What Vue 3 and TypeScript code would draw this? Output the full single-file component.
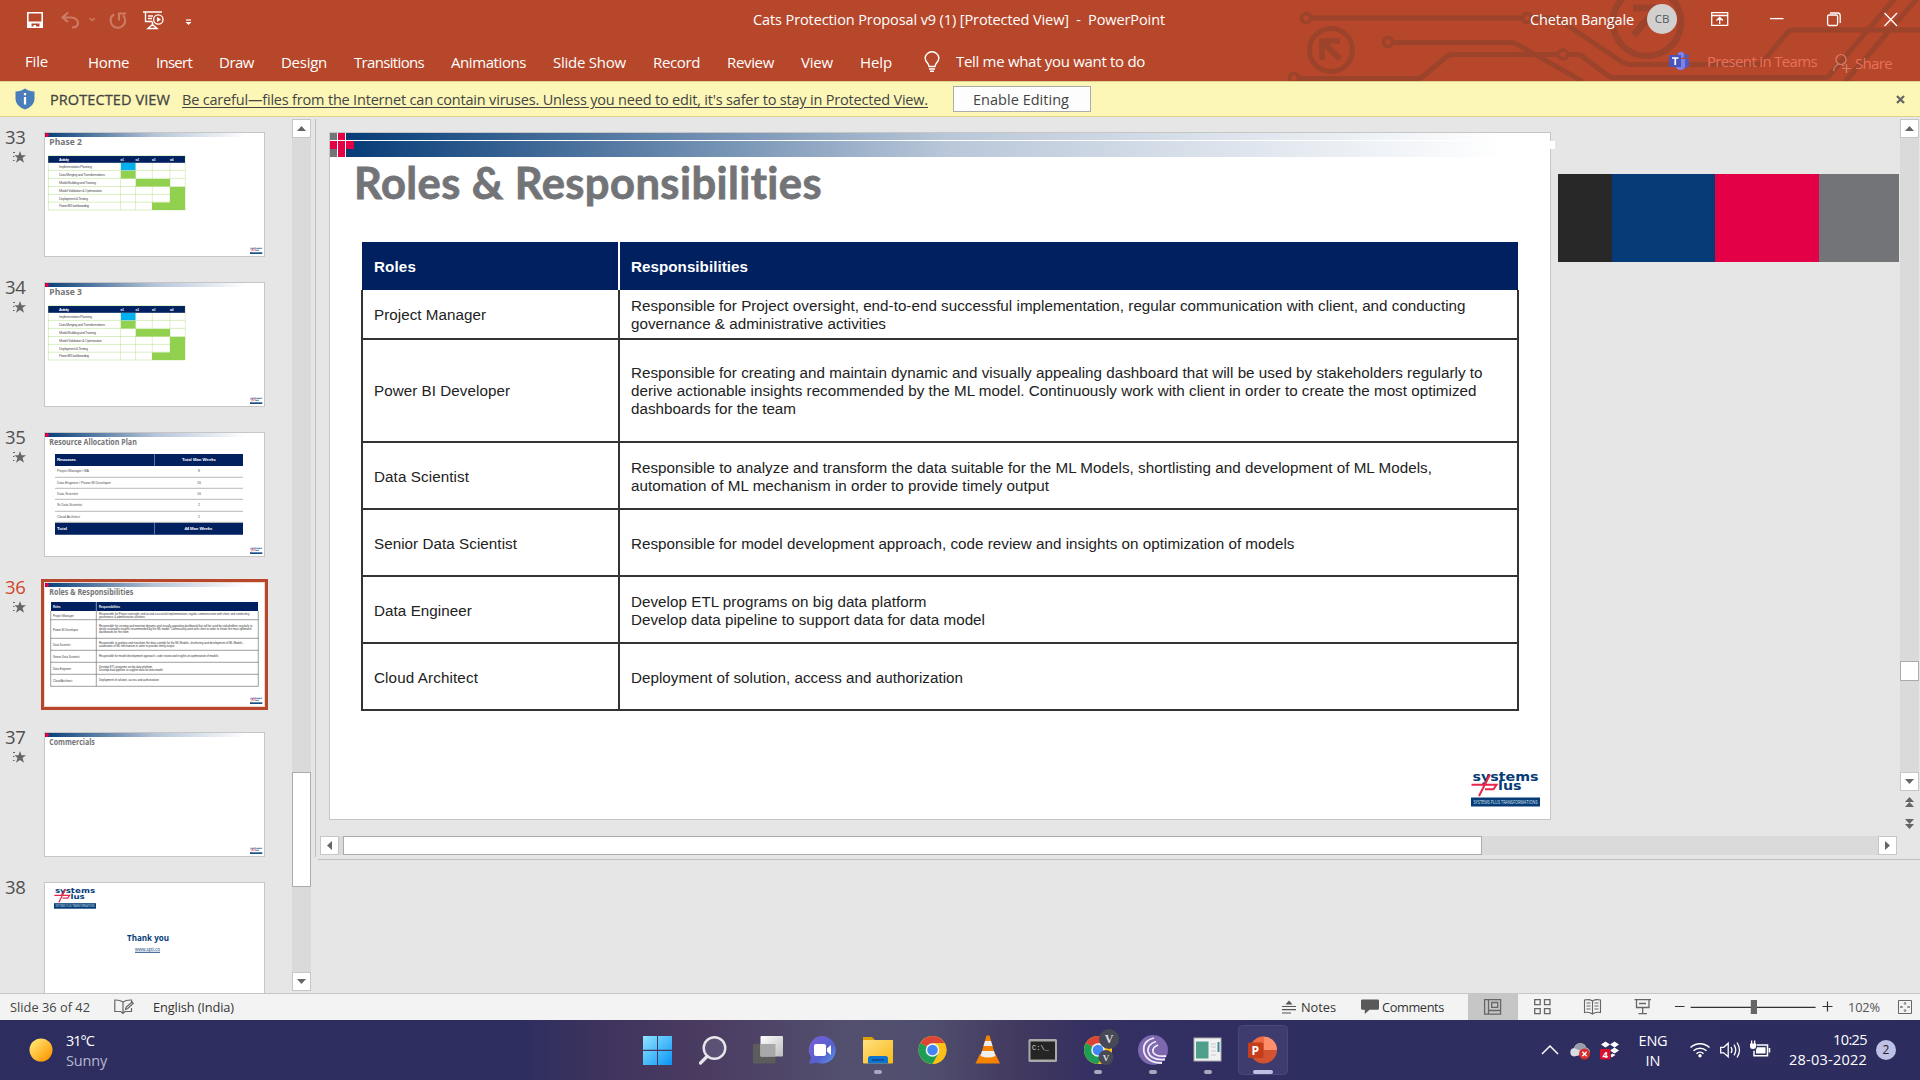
<script setup lang="ts">
import { ref } from 'vue'

interface Line { t: string; w: number }
interface RoleRow { role: string; rw: number; h: number; lines: Line[] }

// Spreads the letters of a label so that it takes the given width.
const vFit = {
  mounted(el: HTMLElement, binding: { value: number }) {
    const n = (el.textContent ?? '').length
    const natural = el.getBoundingClientRect().width
    if (n > 0) el.style.letterSpacing = `${((binding.value - natural) / n).toFixed(4)}px`
  },
}

const windowTitle = 'Cats Protection Proposal v9 (1) [Protected View]  -  PowerPoint'

const tabs = ref<Line[]>([
  { t: 'Home', w: 41 }, { t: 'Insert', w: 36 }, { t: 'Draw', w: 35 }, { t: 'Design', w: 46 },
  { t: 'Transitions', w: 70 }, { t: 'Animations', w: 75 }, { t: 'Slide Show', w: 73 },
  { t: 'Record', w: 47 }, { t: 'Review', w: 47 }, { t: 'View', w: 32 }, { t: 'Help', w: 32 },
])

const roles = ref<RoleRow[]>([
  { role: 'Project Manager', rw: 112, h: 50, lines: [
    { t: 'Responsible for Project oversight, end-to-end successful implementation, regular communication with client, and conducting', w: 834.5 },
    { t: 'governance & administrative activities', w: 255 }] },
  { role: 'Power BI Developer', rw: 136, h: 103, lines: [
    { t: 'Responsible for creating and maintain dynamic and visually appealing dashboard that will be used by stakeholders regularly to', w: 851.5 },
    { t: 'derive actionable insights recommended by the ML model. Continuously work with client in order to create the most optimized', w: 845.5 },
    { t: 'dashboards for the team', w: 165 }] },
  { role: 'Data Scientist', rw: 95, h: 67, lines: [
    { t: 'Responsible to analyze and transform the data suitable for the ML Models, shortlisting and development of ML Models,', w: 801 },
    { t: 'automation of ML mechanism in order to provide timely output', w: 418 }] },
  { role: 'Senior Data Scientist', rw: 143, h: 67, lines: [
    { t: 'Responsible for model development approach, code review and insights on optimization of models', w: 663.5 }] },
  { role: 'Data Engineer', rw: 98, h: 67, lines: [
    { t: 'Develop ETL programs on big data platform', w: 295.5 },
    { t: 'Develop data pipeline to support data for data model', w: 354 }] },
  { role: 'Cloud Architect', rw: 104, h: 67, lines: [
    { t: 'Deployment of solution, access and authorization', w: 332 }] },
])

const miniY = [32.3, 46, 61.3, 73.3, 85.3, 97.3]
const miniLines = [36.7, 55.3, 67.3, 79.3, 91.3, 103.3]

const thumbs = ref([
  { n: 33, kind: 'phase', title: 'Phase 2', tw: 32.5 },
  { n: 34, kind: 'phase', title: 'Phase 3', tw: 32.5 },
  { n: 35, kind: 'resource', title: 'Resource Allocation Plan', tw: 87.5 },
  { n: 36, kind: 'roles', title: 'Roles & Responsibilities', tw: 84 },
  { n: 37, kind: 'plain', title: 'Commercials', tw: 45.5 },
  { n: 38, kind: 'thanks', title: '', tw: 0 },
])

const activities: Line[] = [
  { t: 'Implementation Planning', w: 33 }, { t: 'Data Merging and Transformations', w: 46 },
  { t: 'Model Building and Training', w: 37 }, { t: 'Model Validation & Optimization', w: 43 },
  { t: 'Deployment & Testing', w: 29 }, { t: 'Power BI Dashboarding', w: 30 },
]
const phaseLines = [37.4, 45.4, 53.5, 61.4, 69.2, 77]
const resources = [
  { t: 'Project Manager / BA', w: 32, v: '8', y: 39.3 },
  { t: 'Data Engineer / Power BI Developer', w: 54, v: '16', y: 51 },
  { t: 'Data Scientist', w: 21, v: '16', y: 62 },
  { t: 'Sr Data Scientist', w: 25, v: '2', y: 73 },
  { t: 'Cloud Architect', w: 23, v: '2', y: 85 },
]
</script>

<template>
  <div class="app">
    <header class="head">
      <svg class="circuit" width="640" height="81" viewBox="1280 0 640 81" fill="none" stroke="#9b432b" stroke-width="5">
        <circle cx="1306" cy="18" r="4.5" stroke-width="3.5" /><path d="M1311 18H1523" />
        <circle cx="1527" cy="18" r="4.5" stroke-width="3.5" /><path d="M1532 18h24l14 9L1622 62q4 2.500 8 2.500H1755q6 0 9-4L1787 33q2-3 6-3H1920" />
        <circle cx="1388" cy="42" r="4.500" stroke-width="3.500" /><path d="M1393 42.500H1510q5 0 9 3L1582 81" />
        <circle cx="1294" cy="78" r="4.500" stroke-width="3.500" /><path d="M1299 78.500H1417q4 0 7-3L1446 57q3-2.500 7-2.500H1558" />
        <circle cx="1563" cy="54.500" r="4.500" stroke-width="3.500" /><path d="M1568 54.500h9q4 0 7 3L1607 75q3 2.500 7 2.500H1825q4 0 6-4L1896-3" />
        <path d="M1843 84 1921-6" />
        <circle cx="1331" cy="50" r="21.500" /><path d="M1340 41h-18v19M1323 42l17 17" stroke-width="5.500" />
        <circle cx="1647" cy="22" r="34" stroke-width="6.500" /><path d="M1633 8h24v24M1656 9l-22 26" stroke-width="7" />
      </svg>

      <div class="titlebar">
        <svg width="200" height="40" viewBox="0 0 200 40" fill="none">
          <path d="M27.800 12.800h14.400v14.400H27.800z" stroke="#fff" stroke-width="1.600" />
          <path d="M28 21.500h14v5.500h-2.500v-3.500h-8v3.500H28zM33.500 25h2.500v3h-2.500z" fill="#fff" />
          <g stroke="#cd7b66" stroke-width="2.200">
            <path d="M62.500 17.500h9q6.500 1 6.500 5.500t-6 4.500M68 12.500l-5.500 5 5.500 4.500" />
            <path d="M89.500 18l2.700 2.500L95 18" stroke-width="1.300" />
            <path d="M114 14.300a7.300 7.300 0 1 0 9 1M126 13.500h-7v7" />
          </g>
          <path d="M143 12h19M145.500 12v9.500h7M148 16h5M148 18.500h4M152.500 22v4M148 28.500l4.500-4 4.500 4z" stroke="#fff" stroke-width="1.400" />
          <circle cx="158.300" cy="19.500" r="4.700" stroke="#fff" stroke-width="1.300" /><path d="M157 17l4 2.500-4 2.500z" fill="#fff" />
          <path d="M186 20h5" stroke="#fff" stroke-width="1.200" /><path d="M185.500 22h6l-3 3z" fill="#fff" />
        </svg>
        <span v-fit="412" class="t title">{{ windowTitle }}</span>
        <span v-fit="104" class="t user">Chetan Bangale</span>
        <span class="avatar">CB</span>
        <svg class="winctl" width="200" height="40" viewBox="1700 0 200 40" fill="none" stroke="#fff" stroke-width="1.300">
          <path d="M1711.700 12.700h16v12.600h-16zM1711.700 15.500h16M1719.700 24v-6M1716.500 20.500l3.200-3 3.200 3" />
          <path d="M1770 18.600h13.500" />
          <path d="M1827.600 16.500q0-1.500 1.500-1.500h7q1.500 0 1.500 1.500v7.500q0 1.500-1.500 1.500h-7q-1.500 0-1.500-1.500zM1830 13h7.500q2.700 0 2.700 2.700v7.300" />
          <path d="M1884.500 13l12.500 13M1897 13l-12.500 13" />
        </svg>
      </div>

      <nav class="ribbon">
        <span v-fit="23" class="t file">File</span>
        <div class="tabs"><span v-for="tab in tabs" :key="tab.t" v-fit="tab.w" class="t">{{ tab.t }}</span></div>
        <svg class="bulb" width="16" height="22" viewBox="0 0 16 22" fill="none" stroke="#fff" stroke-width="1.400">
          <path d="M5 15.500C5 12 1.200 11.500 1.200 7.200a6.800 6.400 0 0 1 13.600 0C14.800 11.500 11 12 11 15.500zM5 18h6M6 20.300h4" />
        </svg>
        <span v-fit="189" class="t tell">Tell me what you want to do</span>
        <svg class="teams" width="21" height="20" viewBox="0 0 21 20">
          <circle cx="12" cy="4" r="3.200" fill="#7b83eb" /><circle cx="17.500" cy="5" r="2.200" fill="#5059c9" />
          <path d="M14 8h6v6q0 3-3.500 3z" fill="#5059c9" /><path d="M8 8h8v7q0 4-4.500 4T7 15z" fill="#7b83eb" />
          <path d="M0 4h12v12H0z" fill="#4b53bc" /><path d="M3 7h6.500M6.250 7v7" stroke="#fff" stroke-width="1.700" />
        </svg>
        <span v-fit="110" class="t present">Present in Teams</span>
        <svg class="shareico" width="18" height="20" viewBox="0 0 18 20" fill="none" stroke="#d2806c" stroke-width="1.200">
          <circle cx="8" cy="6.500" r="5" /><path d="M.7 18q.3-5 5-7M9 12l2 1M13.500 11v9M9 15.500h9" />
        </svg>
        <span v-fit="37" class="t share">Share</span>
      </nav>
    </header>

    <div class="notice">
      <svg width="20" height="22" viewBox="0 0 20 22"><path d="M10 .5Q6 3.500.5 3.500V11q0 7 9.500 10.500Q19.500 18 19.500 11V3.500Q14 3.500 10 .5z" fill="#4a7ebb" /><path d="M10 9v7.500M10 5v2.300" stroke="#fff" stroke-width="2.200" /></svg>
      <span v-fit="120" class="t pv">PROTECTED VIEW</span>
      <span v-fit="746" class="t careful">Be careful—files from the Internet can contain viruses. Unless you need to edit, it's safer to stay in Protected View.</span>
      <button class="enable"><span v-fit="96" class="t">Enable Editing</span></button>
      <svg class="x" width="9" height="9" viewBox="0 0 9 9"><path d="M1 1l7 7M8 1L1 8" stroke="#666" stroke-width="2.300" /></svg>
    </div>

    <main class="work">
      <aside class="pane">
        <div v-for="s in thumbs" :key="s.n" class="item" :class="{ sel: s.n === 36 }">
          <div class="num">
            <span v-fit="20.5" class="t">{{ s.n }}</span>
            <svg v-if="s.n !== 38" width="13" height="12" viewBox="0 0 13 12" fill="#666"><path d="M7 0l1.600 4.200H13L9.500 7 11 11.700 7 9 3 11.700 4.500 7 1.500 4.200h4z" /><path d="M0 1h2v1H0zM0 5h1.500v1H0zM0 9h1.500v1H0z" /></svg>
          </div>
          <div class="thumb">
            <svg width="219" height="123" viewBox="0 0 219 123">
              <defs>
                <linearGradient id="bar"><stop offset="0" stop-color="#053c77" /><stop offset=".5" stop-color="#b5c4d7" /><stop offset=".92" stop-color="#fff" /></linearGradient>
              </defs>
              <template v-if="s.kind !== 'thanks'">
                <rect width="219" height="4" fill="url(#bar)" />
                <path d="M0 1h1V0h2v1h1v2H3v1H1V3H0z" fill="#e40046" />
                <text x="4.300" y="12" class="ttl" :textLength="s.tw" lengthAdjust="spacingAndGlyphs">{{ s.title }}</text>
              </template>
              <g v-if="s.kind === 'phase'" class="mini">
                <rect x="3" y="23" width="137" height="6.800" fill="#002060" />
                <text x="14" y="27.700" class="w" textLength="10">Activity</text>
                <text v-for="(x, i) in [75.5, 90.5, 107, 125]" :key="x" :x="x" y="27.500" class="w wk" textLength="3.500">w{{ i + 1 }}</text>
                <rect x="76" y="30" width="14.500" height="7.400" fill="#00b0f0" />
                <path d="M76 38h14.500v7.400H76zM91 46h34v7.500H91zM125 54h15v23H125zM107 69.500h18V77h-18z" fill="#92d050" />
                <path v-for="y in phaseLines" :key="y" :d="`M3 ${y}H140`" stroke="#92d050" stroke-opacity=".5" stroke-width=".7" />
                <path d="M3.400 22.600V77M75.600 30v47M90.600 30v47M107.300 30v47M125 30v47M140.300 22.600V77M3 22.600h137" stroke="#92d050" stroke-opacity=".45" stroke-width=".7" />
                <text v-for="(a, i) in activities" :key="a.t" x="14" :y="35.200 + i * 7.850" :textLength="a.w">{{ a.t }}</text>
              </g>
              <g v-if="s.kind === 'resource'" class="mini">
                <path d="M10 21h188v12H10zM10 89.700h188v12H10z" fill="#002060" />
                <path d="M109.500 21v12M109.500 90v11.500" stroke="#8a96b4" stroke-width=".7" />
                <path d="M10 44.300h188M10 55.300h188M10 66.300h188M10 78.300h188M10 89.300h188" stroke="#999" stroke-width=".7" />
                <text x="12" y="28" class="w b" textLength="19">Resources</text><text x="137" y="28" class="w b" textLength="34">Total Man Weeks</text>
                <g v-for="r in resources" :key="r.t"><text x="12" :y="r.y" :textLength="r.w">{{ r.t }}</text><text x="154" :y="r.y" text-anchor="middle">{{ r.v }}</text></g>
                <text x="12" y="97" class="w b" textLength="10">Total</text><text x="139.500" y="97" class="w b" textLength="28">44 Man Weeks</text>
              </g>
              <g v-if="s.kind === 'roles'" class="mini r">
                <rect x="6" y="19" width="207" height="9" fill="#002060" />
                <text x="8" y="25" class="w" textLength="7.500">Roles</text><text x="54" y="25" class="w" textLength="21">Responsibilities</text>
                <path d="M51.300 19v9" stroke="#ccd" stroke-width=".7" />
                <path d="M5.700 28v75.300M51.300 28v75.300M213.300 28v75.300" stroke="#777" stroke-width=".7" />
                <path v-for="y in miniLines" :key="y" :d="`M5.500 ${y}H213.500`" stroke="#777" stroke-width=".7" />
                <g v-for="(r, i) in roles" :key="r.role">
                  <text x="8" :y="miniY[i] + 1.600" :textLength="r.rw * 0.185">{{ r.role }}</text>
                  <text v-for="(l, j) in r.lines" :key="l.t" x="54" :y="miniY[i] + 1.000 + (j - (r.lines.length - 1) / 2) * 3.200" :textLength="l.w * 0.18">{{ l.t }}</text>
                </g>
              </g>
              <template v-if="s.kind === 'thanks'">
                <text x="82" y="57.800" class="ttl ty" textLength="42" lengthAdjust="spacingAndGlyphs">Thank you</text>
                <text x="90" y="68" class="url" textLength="25">www.spti.co</text><path d="M90 69.300h25" stroke="#053c77" stroke-width=".9" />
              </template>
              <svg :x="s.kind === 'thanks' ? 9 : 205" :y="s.kind === 'thanks' ? 4 : 114" :width="s.kind === 'thanks' ? 42 : 12.500" :height="s.kind === 'thanks' ? 22 : 7" viewBox="0 0 69 36" preserveAspectRatio="none">
                <use href="#brand" />
              </svg>
            </svg>
          </div>
        </div>
      </aside>

      <div class="vbar left">
        <i class="btn"><svg width="9" height="5"><path d="M0 5l4.500-5L9 5z" /></svg></i>
        <i class="knob"></i>
        <i class="btn end"><svg width="9" height="5"><path d="M0 0l4.500 5L9 0z" /></svg></i>
      </div>

      <section class="stage">
        <div class="upper">
          <div class="canvas">
            <div class="row">
              <article class="slide">
                <svg class="band" width="1226" height="25" viewBox="329 132 1226 25">
                  <defs><linearGradient id="big" gradientUnits="userSpaceOnUse" x1="346" x2="1551" y1="0" y2="0"><stop offset="0" stop-color="#053c77" /><stop offset=".5" stop-color="#b9c7d9" /><stop offset=".96" stop-color="#fff" /></linearGradient></defs>
                  <path d="M346 133h1204v7H346zM346 141h1204v16H346z" fill="url(#big)" />
                  <path d="M330 133h7v7h-7zM330 149h7v8h-7z" fill="#737477" />
                  <path d="M338 133h7v7h-7zM330 141h7v8h-7zM338 141h7v16h-7zM346 141h8v8h-8z" fill="#e40046" />
                  <path d="M1550 141h5v8h-5z" fill="#fff" />
                </svg>
                <h1><span v-fit="468" class="t">Roles &amp; Responsibilities</span></h1>
                <div class="table">
                  <div class="thead"><b><span v-fit="42" class="t">Roles</span></b><b><span v-fit="117" class="t">Responsibilities</span></b></div>
                  <div v-for="r in roles" :key="r.role" class="tr" :class="{ tall: r.h === 103, first: r.h === 50 }">
                    <div><span v-fit="r.rw" class="t">{{ r.role }}</span></div>
                    <div><span v-for="l in r.lines" :key="l.t" v-fit="l.w" class="t">{{ l.t }}</span></div>
                  </div>
                </div>
                <svg class="logo" width="69" height="36" viewBox="0 0 69 36">
                  <g id="brand">
                    <text x="1.500" y="10" class="lg" textLength="66" lengthAdjust="spacingAndGlyphs">systems</text>
                    <text x="27" y="19" class="lg" textLength="23.500" lengthAdjust="spacingAndGlyphs">lus</text>
                    <path d="M19 3.500L8 25M.5 13.700h25l-3 4.500h-8.500" fill="none" stroke="#e8264c" stroke-width="2" />
                    <rect y="26.500" width="69" height="9" fill="#053c77" />
                    <text x="2.500" y="32.800" class="tag" textLength="64" lengthAdjust="spacingAndGlyphs">SYSTEMS PLUS TRANSFORMATIONS</text>
                  </g>
                </svg>
              </article>
              <div class="swatches"><i class="s1"></i><i class="s2"></i><i class="s3"></i><i class="s4"></i></div>
            </div>
            <div class="hbar">
              <i class="btn"><svg width="5" height="9"><path d="M5 0L0 4.500 5 9z" /></svg></i>
              <i class="knob"></i>
              <i class="btn end"><svg width="5" height="9"><path d="M0 0l5 4.500L0 9z" /></svg></i>
            </div>
          </div>
          <div class="rightcol">
            <div class="vbar right">
              <i class="btn"><svg width="9" height="5"><path d="M0 5l4.500-5L9 5z" /></svg></i>
              <i class="knob"></i>
              <i class="btn end"><svg width="9" height="5"><path d="M0 0l4.500 5L9 0z" /></svg></i>
            </div>
            <svg class="dbl" width="19" height="44" viewBox="0 0 19 44" fill="#666"><path d="M9.500 6l4.500 5h-9zM9.500 11l4.500 5h-9zM5 28h9l-4.500 5zM5 33h9l-4.500 5z" /></svg>
          </div>
        </div>
        <div class="notes"></div>
      </section>
    </main>

    <footer class="status">
      <span v-fit="80" class="t c1">Slide 36 of 42</span>
      <svg class="spell" width="20" height="16" viewBox="0 0 20 16" fill="none" stroke="#666" stroke-width="1.200"><path d="M9 13.500V3Q6 .8.800 1v11.500h6L9 14.500l2-2h6.500V9M9 3q3-2.200 8.500-2v2M11.500 10.500l.7-2.500 6-5 1 1.500-5.500 5z" /></svg>
      <span v-fit="81" class="t">English (India)</span>
      <svg class="n1" width="14" height="14" viewBox="0 0 14 14"><path d="M3.500 4.500L7 .5l3.500 4z" fill="#555" /><path d="M0 6.500h14M0 9.700h14M0 13h9" stroke="#555" stroke-width="1.200" /></svg>
      <span v-fit="35" class="t n2">Notes</span>
      <svg class="n3" width="18" height="16" viewBox="0 0 19 16"><path d="M1.500 0h16q1.500 0 1.500 1.500v8q0 1.500-1.500 1.500H9l-5 4.500V11H1.500Q0 11 0 9.500v-8Q0 0 1.500 0z" fill="#595959" /></svg>
      <span v-fit="62" class="t">Comments</span>
      <svg class="views" width="184" height="26" viewBox="1468 994 184 26" fill="none" stroke="#666" stroke-width="1.300">
        <path d="M1468 994h50v26h-50z" fill="#c6c6c6" stroke="none" />
        <path d="M1484.600 999.600h16v14.500h-16zM1488.500 1000v14M1488.500 1010.500h12M1491.700 1002.500h6v4.800h-6z" />
        <path d="M1534.700 999.600h5.500v5h-5.500zM1544.500 999.600h5.500v5h-5.500zM1534.700 1008.600h5.500v5h-5.500zM1544.500 1008.600h5.500v5h-5.500z" />
        <path d="M1592.500 1001q-3-2-8-1v12.500q5-1 8 1.500 3-2.500 8-1.500V1000q-5-1-8 1zM1592.500 1001v13M1586.500 1003h4M1586.500 1006h4M1586.500 1009h4M1594.500 1003h4M1594.500 1006h4M1594.500 1009h4" stroke-width="1.100" />
        <path d="M1634.500 999.700h16.500M1636.500 1000v7.500h12.500V1000M1639 1003.500h7M1642.700 1008v5.500M1638.500 1013.600h8.500" />
      </svg>
      <svg class="zoom" width="160" height="26" viewBox="1674 994 160 26" fill="none" stroke="#333" stroke-width="1.200">
        <path d="M1675 1006.500h9.500M1822.500 1006.500h10M1827.500 1001.500v10M1690.600 1007.300h125" /><path d="M1750.800 1000h6.200v14h-6.200z" fill="#666" stroke="none" />
      </svg>
      <span v-fit="32" class="t pct">102%</span>
      <svg class="fitico" width="14" height="14" viewBox="0 0 14 14" fill="none" stroke="#666"><path d="M.5.5h13v13H.5zM7 2.500v2.500M7 9v2.500M2.500 7H5M9 7h2.500M6 3.500L7 2.500l1 1M6 10.500l1 1 1-1M3.500 6l-1 1 1 1M10.500 6l1 1-1 1" /></svg>
    </footer>

    <div class="taskbar">
      <svg class="sun" width="24" height="24" viewBox="0 0 24 24"><defs><linearGradient id="sun" x2="1" y2="1"><stop offset=".1" stop-color="#ffe872" /><stop offset=".9" stop-color="#ff9500" /></linearGradient></defs><circle cx="12" cy="12" r="11.500" fill="url(#sun)" /></svg>
      <div class="weather"><span v-fit="28" class="t">31°C</span><span v-fit="41" class="t dim">Sunny</span></div>
      <svg class="icons" width="660" height="60" viewBox="630 1020 660 60">
        <defs>
          <linearGradient id="win" x2="1" y2="1"><stop offset="0" stop-color="#8fe3ff" /><stop offset="1" stop-color="#0a95f5" /></linearGradient>
          <linearGradient id="chat" x2="1" y2="1"><stop offset="0" stop-color="#7b60d8" /><stop offset=".6" stop-color="#5560cf" /><stop offset="1" stop-color="#5b9df0" /></linearGradient>
          <linearGradient id="fold" x2="1" y2="1"><stop offset="0" stop-color="#ffe082" /><stop offset="1" stop-color="#fbb915" /></linearGradient>
          <linearGradient id="tv" x2="1" y2="1"><stop offset="0" stop-color="#fff" /><stop offset="1" stop-color="#bdbdbd" /></linearGradient>
          <g id="chrome">
            <circle r="14" fill="#fbc116" />
            <path d="M0 0L-12.100-7A14 14 0 0 1 12.100-7z" fill="#dc4437" />
            <path d="M0 0L-12.100-7A14 14 0 0 0 0 14L6 3.500z" fill="#1e9d57" />
            <path d="M0-7H12.100A14 14 0 0 1 0 14L6 3.500z" fill="#fbc116" />
            <circle r="6.800" fill="#f4f4f4" /><circle r="5.300" fill="#4285f4" />
          </g>
        </defs>
        <path d="M643 1036h14v13.800h-14zM658 1036h14v13.800h-14zM643 1051h14v14h-14zM658 1051h14v14h-14z" fill="url(#win)" />
        <circle cx="714.500" cy="1048" r="10.800" fill="#6d6687" fill-opacity=".5" stroke="#e6e6ea" stroke-width="2.400" /><path d="M707 1056.500l-6.500 6.500" stroke="#e6e6ea" stroke-width="3.200" stroke-linecap="round" />
        <rect x="753" y="1044" width="22.500" height="19.500" rx="1" fill="#5c5c5c" /><rect x="760.500" y="1036" width="22.500" height="20.500" rx="1" fill="url(#tv)" /><rect x="760.500" y="1044" width="15" height="12.500" fill="#a8a8a8" />
        <path d="M823 1036a13.800 13.800 0 1 1-5.500 26.800l-8.500 1 2.200-6A14 14 0 0 1 823 1036z" fill="url(#chat)" /><rect x="814" y="1044" width="12" height="12" rx="2" fill="#fff" /><path d="M827 1048.500l4-3.500v10l-4-3.500z" fill="#fff" />
        <path d="M863 1037h9l3 3h18v23h-30z" fill="#dfa000" /><rect x="863" y="1040" width="30" height="23.500" rx="1" fill="url(#fold)" /><path d="M868 1063.500v-5q0-2.500 2.500-2.500h15q2.500 0 2.500 2.500v5z" fill="#0f74cf" /><path d="M872 1060h12" stroke="#0a4a94" stroke-width="1.500" />
        <use href="#chrome" x="932.500" y="1050" />
        <path d="M980 1054h15.500l4.500 9.500h-24.500z" fill="#f58200" /><path d="M986.500 1035.500h3l6.500 22.500q-8 4-16 0z" fill="#f58200" /><path d="M985 1041h6l1.500 5h-9zM982 1051h12l1.500 5q-7.500 3-15 0z" fill="#efefef" />
        <rect x="1028.500" y="1039" width="28.500" height="23" rx="1.500" fill="#a9a9a9" /><rect x="1030.500" y="1041.500" width="24.500" height="18" fill="#252525" /><text x="1032" y="1049.500" class="cmd">C:\_</text>
        <use href="#chrome" x="1098" y="1050" /><circle cx="1109" cy="1039" r="10" fill="#474957" /><circle cx="1106" cy="1057.500" r="7.500" fill="#474957" />
        <g class="vk"><text x="1109" y="1043">V</text><text x="1106" y="1061" class="sm">V</text></g>
        <circle cx="1153" cy="1050" r="15" fill="#7d68b0" /><g fill="none" stroke="#f0ecf8" stroke-width="1.800"><path d="M1154 1038q-12 3-10 14 3 11 18 11" /><path d="M1156 1041.500q-9 3-8 10 2.500 9 17 8" /><path d="M1158 1045q-6 2.500-5 7 2 5 13 4" /></g>
        <rect x="1194" y="1038" width="27" height="23" fill="#f1f1f1" stroke="#aaa" /><path d="M1196 1041.500h12.500v17H1196z" fill="#4d9e8b" /><path d="M1211 1044h5M1211 1047h5M1211 1051h5M1211 1055h5" stroke="#c9c9c9" /><path d="M1218.500 1042v10" stroke="#3d8a92" stroke-width="2" />
        <rect x="1238.500" y="1025.500" width="49" height="49" rx="4" fill="#3e3c6f" stroke="#4a487a" />
        <circle cx="1263.500" cy="1050" r="13.500" fill="#d35230" /><path d="M1263.500 1036.500A13.500 13.500 0 0 1 1277 1050h-13.500z" fill="#ff8f6b" /><path d="M1250 1050a13.500 13.500 0 0 1 13.500-13.500V1050z" fill="#ed6c47" />
        <rect x="1248" y="1042.500" width="15.500" height="15.500" rx="1.500" fill="#c43e1c" /><text x="1251.500" y="1054.500" class="pp">P</text>
        <g fill="#a9a7be"><rect x="874" y="1070" width="8" height="4" rx="2" /><rect x="1094" y="1070" width="8" height="4" rx="2" /><rect x="1149" y="1070" width="8" height="4" rx="2" /><rect x="1204" y="1070" width="8" height="4" rx="2" /></g>
        <rect x="1253" y="1070" width="20" height="4" rx="2" fill="#bfc0e6" />
      </svg>
      <svg class="tray" width="80" height="40" viewBox="1541 1030 80 40">
        <path d="M1542 1054l8-8 8 8" fill="none" stroke="#fff" stroke-width="1.500" />
        <path d="M1574 1056.500a4.300 4.300 0 0 1 0-8.500 6.500 6.500 0 0 1 12.500 0q4 1 3 5z" fill="#dadbe2" /><path d="M1574 1048a6.500 6.500 0 0 1 12.500 0q3 .5 3 3l-6 1z" fill="#9a9dab" /><circle cx="1584.500" cy="1054" r="5.500" fill="#d92c2c" /><path d="M1582.300 1051.800l4.400 4.400M1586.700 1051.800l-4.400 4.400" stroke="#fff" stroke-width="1.300" />
        <path d="M1601 1044.500l4.500-3 4.500 3-4.500 3zM1610 1044.500l4.500-3 4.500 3-4.500 3zM1610 1050.500l4.500-3 4.500 3-4.500 3zM1610.500 1055l2-1.500 3 1.500-4 2.500z" fill="#fff" /><rect x="1600" y="1049" width="10.500" height="10.500" rx="1" fill="#d8112c" /><text x="1602.500" y="1057.800" class="four">4</text>
      </svg>
      <div class="lang"><span v-fit="29" class="t">ENG</span><span v-fit="15" class="t">IN</span></div>
      <svg class="net" width="82" height="30" viewBox="1690 1035 82 30" fill="none" stroke="#fff" stroke-width="1.500">
        <path d="M1690.500 1047.500a14 14 0 0 1 19 0M1693.500 1050.700a9.500 9.500 0 0 1 13 0M1696.500 1053.700a5 5 0 0 1 7 0" /><circle cx="1700" cy="1055.800" r="1.700" fill="#fff" stroke="none" />
        <path d="M1720.700 1047.300h3l4.500-4v13.500l-4.500-4h-3zM1731 1047q2 3 0 6M1734 1044.700q3.500 5.300 0 10.600M1737 1042.500q5 7.500 0 15" stroke-width="1.300" />
        <path d="M1756.500 1045h11v10.700h-13.500v-5M1769.500 1048v4.500" /><path d="M1750 1043.500h6v3q0 2.500-3 2.500t-3-2.500zM1751 1040.500h1.300v3h-1.300zM1754 1040.500h1.300v3h-1.300zM1757 1047.300h8.500v6.200H1756v-3.500z" fill="#fff" stroke="none" />
      </svg>
      <div class="clock"><span v-fit="34" class="t">10:25</span><span v-fit="78" class="t">28-03-2022</span></div>
      <span class="count">2</span>
    </div>
  </div>
</template>

<style>
body { margin: 0; overflow: hidden; }
</style>

<style scoped>
.app { width: 1920px; height: 1080px; display: flex; flex-direction: column; overflow: hidden; background: #e6e6e6; font-family: "Open Sans", "Noto Sans", sans-serif; font-size: 14.500px; color: #444; }
.app * { box-sizing: border-box; }
.t { white-space: pre; display: inline-block; flex: none; }
svg { flex: none; display: block; }
i { display: block; flex: none; }

.head { position: relative; height: 81px; background: #b7472a; color: #fff; }
.circuit { position: absolute; left: 1280px; top: 0; }
.titlebar, .ribbon { position: relative; display: flex; align-items: center; }
.titlebar { height: 40px; }
.title { margin: -2px 0 0 553px; }
.user { margin: -2px 0 0 365px; }
.avatar { width: 30px; height: 30px; margin: -2px 0 0 13px; border-radius: 50%; background: #d2d0ce; color: #505a64; font-size: 11.500px; text-align: center; line-height: 30px; }
.winctl { margin-left: 23px; }
.ribbon { height: 41px; padding-top: 3px; font-size: 15px; }
.file { margin: -2px 0 0 25px; }
.tabs { display: flex; gap: 27px; margin-left: 40px; }
.bulb { margin-left: 32px; }
.tell { margin: -2px 0 0 16px; }
.teams { margin: -2px 0 0 524px; }
.present { margin: -2px 0 0 17px; color: #e8705a; }
.shareico { margin: 2px 0 0 16px; }
.share { margin: 2px 0 0 4px; color: #e8705a; }

.notice { height: 36px; display: flex; align-items: center; background: #fcf7b6; border-top: 1px solid #dcd48c; border-bottom: 1px solid #dcd48c; padding-left: 15px; }
.pv { margin-left: 15px; -webkit-text-stroke: .3px #444; }
.careful { margin-left: 12px; text-decoration: underline; text-underline-offset: 2px; }
.enable { width: 138px; height: 26px; margin-left: 25px; padding: 0 2px 0 0; border: 1px solid #ababab; background: #fdfdfd; font: inherit; color: #444; display: flex; align-items: center; justify-content: center; }
.x { margin-left: 805px; }

.work { height: 876px; display: flex; }
.pane { width: 292px; height: 876px; overflow: hidden; padding-top: 15px; }
.item { display: flex; height: 150px; }
.num { width: 44px; padding: 0 0 0 5px; font-size: 18.500px; line-height: 24px; margin-top: -7px; font-weight: 400; color: #505050; }
.num .t { display: block; width: max-content; margin-top: 0; }
.num svg { margin: 2px 0 0 8px; }
.sel .num .t { color: #d24726; }
.thumb { width: 221px; height: 125px; border: 1px solid #c6c6c6; background: #fff; }
.sel .thumb { outline: 3px solid #b7472a; border-color: #eed8d2; }
.ttl { font: 700 8.500px "Open Sans", sans-serif; fill: #737477; }
.ty { fill: #053c77; }
.url { font: 4.600px "Open Sans", sans-serif; fill: #053c77; }
.mini text { font: 3.600px "Liberation Sans", sans-serif; fill: #555; }
.mini.r text { font-size: 2.800px; fill: #333; }
.mini text.w { fill: #fff; font-weight: 700; }
.mini text.wk { font-size: 2.600px; }
.mini text.b { font-size: 4.300px; }
.lg { font: 700 11.500px "DejaVu Sans", sans-serif; fill: #053c77; }
.tag { font: 4.600px "Open Sans", sans-serif; fill: #dfe8f2; }

.vbar { width: 19px; background: #dadada; display: flex; flex-direction: column; }
.vbar .btn { width: 19px; height: 19px; }
.btn { border: 1px solid #c6c6c6; background: #fff; display: flex; align-items: center; justify-content: center; }
.btn svg { fill: #666; }
.knob { background: #fff; border: 1px solid #ababab; }
.vbar.left { height: 872px; margin-top: 2px; }
.left .knob { height: 115px; margin-top: 634px; }
.end { margin-top: auto; margin-left: 0; }
.stage { width: 1609px; display: flex; flex-direction: column; }
.upper { display: flex; height: 742px; }
.canvas { width: 1585px; margin: 2px 0 2px 4px; border-left: 1px solid #c0c0c0; }
.row { display: flex; padding: 13px 0 0 13px; height: 717px; }
.slide { position: relative; width: 1222px; height: 688px; flex: none; background: #fff; border: 1px solid #c6c6c6; }
.band { position: absolute; left: -1px; top: -1px; }
h1 { margin: 24px 0 0 24px; font: 700 43.500px/50px Lato, sans-serif; color: #737477; height: 50px; -webkit-text-stroke: .8px #737477; font-variant-ligatures: none; }
.table { margin: 35px 0 0 31px; width: 1158px; font: 15.200px/18px "Liberation Sans", Arial, sans-serif; color: #222; }
.thead { display: flex; height: 48px; margin: 0 1px; background: #002060; color: #fff; }
.thead b { display: flex; align-items: center; padding: 1px 0 0 12px; }
.thead b:first-child { width: 258px; border-right: 2px solid #fff; }
.thead b:last-child { padding-left: 11px; }
.tr { display: flex; height: 67px; border: 2px solid #333; border-top: 0; }
.tr.first { height: 50px; }
.tr.tall { height: 103px; }
.tr > div { display: flex; flex-direction: column; justify-content: center; align-items: flex-start; padding: 2px 0 0 11px; }
.tr.tall > div { padding-top: 1px; }
.tr > div:first-child { width: 257px; border-right: 2px solid #333; }
.logo { position: absolute; left: 1141px; top: 638px; }
.swatches { display: flex; margin: 42px 0 0 7px; height: 88px; }
.s1 { width: 54px; background: #282828; }
.s2 { width: 103px; background: #053c77; }
.s3 { width: 104px; background: #e40046; }
.s4 { width: 80px; background: #737477; }
.hbar { display: flex; width: 1577px; height: 19px; margin: 0 0 0 4px; background: #dadada; }
.hbar .btn { width: 19px; height: 19px; }
.hbar .knob { width: 1139px; margin-left: 4px; }
.hbar .end { margin: 0 0 0 auto; }
.rightcol { width: 20px; padding-top: 2px; }
.vbar.right { height: 672px; }
.right .knob { height: 20px; margin-top: 523px; }
.notes { margin-left: 7px; border-top: 1px solid #c0c0c0; height: 133px; }

.status { height: 27px; border-top: 1px solid #c6c6c6; background: #f3f3f3; display: flex; align-items: center; font-size: 12.800px; color: #333; }
.c1 { margin-left: 10px; color: #444; }
.spell { margin: -1px 19px 0 24px; }
.n1 { margin-left: 1048px; }
.n2 { margin-left: 5px; }
.n3 { margin: 0 3px 0 25px; }
.views { margin-left: 24px; }
.zoom { margin-left: 22px; }
.pct { margin-left: 14px; color: #555; }
.fitico { margin-left: 18px; }

.taskbar { height: 60px; display: flex; align-items: center; color: #fff; font-size: 14.500px; background: linear-gradient(90deg, #2d2e5f 0, #2d2e5f 520px, #40345e 610px, #4a3b60 700px, #53506f 850px, #504e6e 930px, #42395f 1020px, #343062 1090px, #2f2e61 1280px, #2c2d5e 100%); }
.sun { margin-left: 29px; }
.weather, .lang, .clock { display: flex; flex-direction: column; line-height: 20px; }
.weather { width: 60px; margin-left: 13px; align-items: flex-start; padding-top: 1px; }
.dim { color: #b9b9cf; }
.icons { margin-left: 504px; }
.tray { margin-left: 251px; }
.lang { width: 30px; margin-left: 17px; align-items: center; padding-top: 1px; }
.net { margin-left: 22px; }
.clock { width: 78px; margin: -1px 0 0 17px; align-items: flex-end; }
.count { width: 20px; height: 20px; margin-left: 9px; border-radius: 50%; background: #bfc0e6; color: #222; text-align: center; font-size: 12px; line-height: 20px; }
.cmd { font: 7px "Liberation Mono", monospace; fill: #ddd; }
.pp { font: 700 12px "Open Sans", sans-serif; fill: #fff; }
.vk text { font: 700 12px "Liberation Serif", serif; fill: #ddd; text-anchor: middle; }
.vk .sm { font-size: 9px; }
.four { font: 700 9.500px "Open Sans", sans-serif; fill: #fff; }
</style>
